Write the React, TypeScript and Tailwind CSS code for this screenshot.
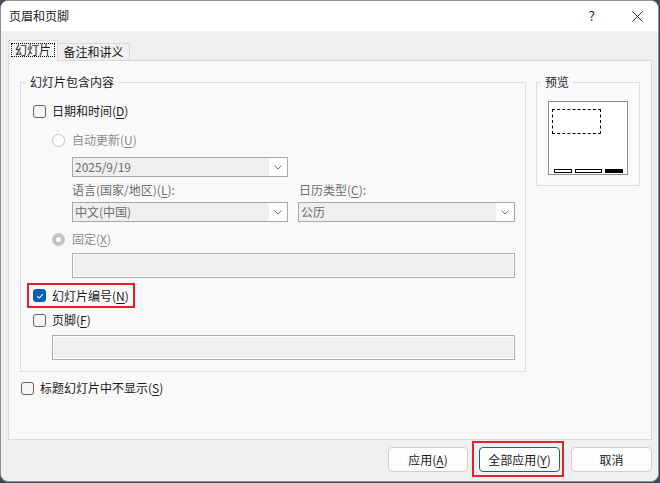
function Key({ k }: { k: string }) {
  return (
    <>
      (<span className="underline decoration-1 underline-offset-2">{k}</span>)
    </>
  );
}

function Checkbox({ checked = false }: { checked?: boolean }) {
  return (
    <span
      className={`flex h-[13px] w-[13px] shrink-0 items-center justify-center rounded-[3px] border ${
        checked ? 'border-[#005fb8] bg-[#005fb8]' : 'border-[#616161] bg-[#f7f7f7]'
      }`}>
      {checked && (
        <svg viewBox="0 0 10 10" className="h-[8px] w-[8px]" fill="none" stroke="white" strokeWidth="1.3">
          <path d="M1.5 5.2 L4 7.6 L8.6 2.6" />
        </svg>
      )}
    </span>
  );
}

function Radio({ filled = false }: { filled?: boolean }) {
  return (
    <span
      className={`h-[13px] w-[13px] shrink-0 rounded-full bg-white ${
        filled ? 'border-[4px] border-[#c4c4c4]' : 'border border-[#c4c4c4]'
      }`}
    />
  );
}

function Combo({ value, width }: { value: string; width: string }) {
  return (
    <div className={`flex h-[20px] ${width} items-stretch border border-[#a8a8a8] bg-[#efefef]`}>
      <div className="flex flex-1 items-center pl-[2px] text-[#6d6d6d]">{value}</div>
      <div className="flex w-[18px] items-center justify-center bg-white">
        <svg viewBox="0 0 8 5" className="h-[5px] w-[8px]" fill="none" stroke="#6d6d6d" strokeWidth="1">
          <path d="M0.5 0.5 L4 4 L7.5 0.5" />
        </svg>
      </div>
    </div>
  );
}

function Field({ width }: { width: string }) {
  return <div className={`h-[25px] ${width} border border-[#adadad] bg-[#efefef] shadow-[inset_0_0_0_1px_#ffffff]`} />;
}

function Button({ label, width, focused = false }: { label: React.ReactNode; width: string; focused?: boolean }) {
  return (
    <div
      className={`flex h-[25px] ${width} items-center justify-center rounded-[4px] border bg-[#fdfdfd] ${
        focused ? 'border-[#1d5d96]' : 'border-[#d0d0d0]'
      }`}>
      {label}
    </div>
  );
}

export default function App() {
  return (
    <div className="h-[483px] w-[660px] bg-[#3d4a5a] font-['Noto_Sans_CJK_SC',sans-serif] text-[12px] leading-4 text-[#1a1a1a]">
      <div className="flex h-[482px] w-[659px] flex-col overflow-hidden rounded-lg border border-[#8f8f8f] bg-[#f0f0f0]">
        {/* Title bar */}
        <div className="flex h-[30px] shrink-0 items-center bg-white pl-[8px] pr-[15px]">
          <span>页眉和页脚</span>
          <span className="ml-auto text-[13px]">?</span>
          <svg viewBox="0 0 12 12" className="ml-[37px] h-[11px] w-[11px]" fill="none" stroke="#1a1a1a" strokeWidth="1">
            <path d="M0.5 0.5 L11.5 11.5 M11.5 0.5 L0.5 11.5" />
          </svg>
        </div>

        {/* Tabs */}
        <div className="mt-[9px] flex items-end pl-[7px]">
          <div className="relative z-10 -mb-px flex h-[21px] w-[50px] items-start justify-center border-x border-t border-[#d9d9d9] bg-[#f9f9f9] pt-[2px]">
            <span className="border border-dotted border-black px-[3px] leading-[12px]">幻灯片</span>
          </div>
          <div className="flex h-[17px] w-[72px] items-center justify-center border-r border-t border-[#d9d9d9] bg-[#f0f0f0]">
            备注和讲义
          </div>
        </div>

        {/* Tab panel */}
        <div className="ml-[7px] h-[380px] w-[644px] shrink-0 border border-[#d9d9d9] bg-[#f9f9f9]">
          <div className="ml-[11px] mt-[21px] flex items-start">
            {/* Group: content */}
            <div className="relative h-[290px] w-[506px] border border-[#dcdcdc]">
              <span className="absolute -top-[9px] left-[5px] bg-[#f9f9f9] px-[4px]">幻灯片包含内容</span>
              <div className="flex flex-col pl-[12px]">
                <div className="mt-[20px] flex h-4 items-center gap-[6px]">
                  <Checkbox />
                  <span>
                    日期和时间<Key k="D" />
                  </span>
                </div>
                <div className="ml-[19px] mt-[13px] flex h-4 items-center gap-[7px] text-[#8c8c8c]">
                  <Radio />
                  <span>
                    自动更新<Key k="U" />
                  </span>
                </div>
                <div className="ml-[39px] mt-[9px]">
                  <Combo value="2025/9/19" width="w-[216px]" />
                </div>
                <div className="ml-[39px] mt-[5px] flex h-4 items-center text-[#6d6d6d]">
                  <span className="w-[227px]">
                    语言(国家/地区)<Key k="L" />:
                  </span>
                  <span>
                    日历类型<Key k="C" />:
                  </span>
                </div>
                <div className="ml-[39px] mt-[4px] flex gap-[10px]">
                  <Combo value="中文(中国)" width="w-[216px]" />
                  <Combo value="公历" width="w-[217px]" />
                </div>
                <div className="ml-[19px] mt-[9px] flex h-4 items-center gap-[7px] text-[#8c8c8c]">
                  <Radio filled />
                  <span>
                    固定<Key k="X" />
                  </span>
                </div>
                <div className="ml-[39px] mt-[6px]">
                  <Field width="w-[443px]" />
                </div>
                <div className="-ml-[6px] mt-[5px] flex h-[25px] w-[108px] items-center gap-[6px] border-2 border-[#e3202c] pl-[4px]">
                  <Checkbox checked />
                  <span>
                    幻灯片编号<Key k="N" />
                  </span>
                </div>
                <div className="mt-[4px] flex h-4 items-center gap-[6px]">
                  <Checkbox />
                  <span>
                    页脚<Key k="F" />
                  </span>
                </div>
                <div className="ml-[19px] mt-[7px]">
                  <Field width="w-[463px]" />
                </div>
              </div>
            </div>

            {/* Group: preview */}
            <div className="relative ml-[10px] h-[104px] w-[104px] border border-[#dcdcdc]">
              <span className="absolute -top-[9px] left-[4px] bg-[#f9f9f9] px-[4px]">预览</span>
              <div className="ml-[11px] mt-[18px] flex h-[74px] w-[80px] flex-col border border-[#8a8a90] bg-white">
                <div className="ml-[3px] mt-[7px] h-[25px] w-[49px] border border-dashed border-black" />
                <div className="mb-[1px] mt-auto flex gap-[3px] pl-[5px]">
                  <div className="h-[4px] w-[18px] border border-black" />
                  <div className="h-[4px] w-[27px] border border-black" />
                  <div className="h-[4px] w-[18px] bg-black" />
                </div>
              </div>
            </div>
          </div>

          <div className="ml-[12px] mt-[8px] flex h-4 items-center gap-[6px]">
            <Checkbox />
            <span>
              标题幻灯片中不显示<Key k="S" />
            </span>
          </div>
        </div>

        {/* Buttons */}
        <div className="mt-[7px] flex justify-end gap-[11px] pr-[6px]">
          <Button
            width="w-[80px]"
            label={
              <span>
                应用<Key k="A" />
              </span>
            }
          />
          <div className="relative">
            <Button
              width="w-[81px]"
              focused
              label={
                <span>
                  全部应用<Key k="Y" />
                </span>
              }
            />
            <div className="absolute -bottom-[5px] -left-[7px] -right-[4px] -top-[6px] border-2 border-[#e3202c]" />
          </div>
          <Button width="w-[81px]" label="取消" />
        </div>
      </div>
    </div>
  );
}
